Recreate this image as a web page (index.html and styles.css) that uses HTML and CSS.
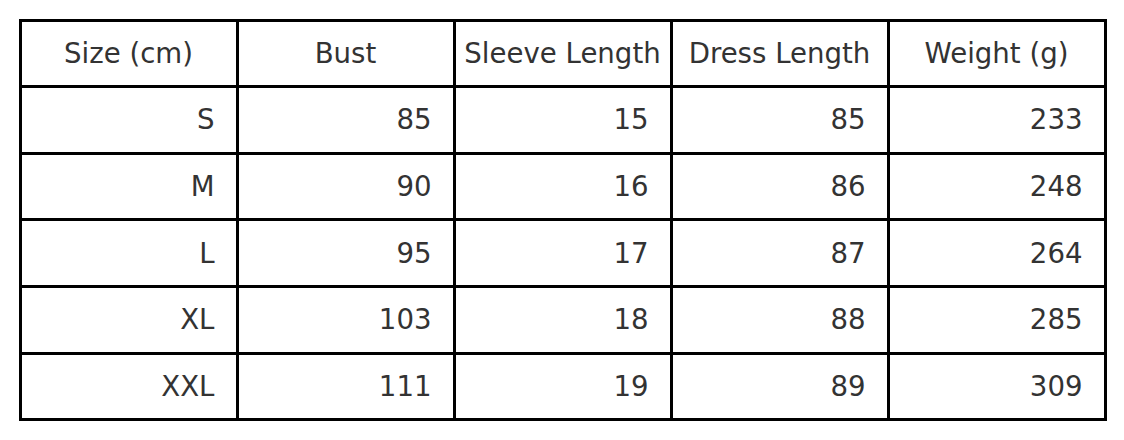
FILE: index.html
```html
<!DOCTYPE html>
<html>
<head>
<meta charset="utf-8">
<link rel="stylesheet" href="styles.css">
</head>
<body>
<table class="size-table">
  <thead>
    <tr><th>Size (cm)</th><th>Bust</th><th>Sleeve Length</th><th>Dress Length</th><th>Weight (g)</th></tr>
  </thead>
  <tbody>
    <tr><td>S</td><td>85</td><td>15</td><td>85</td><td>233</td></tr>
    <tr><td>M</td><td>90</td><td>16</td><td>86</td><td>248</td></tr>
    <tr><td>L</td><td>95</td><td>17</td><td>87</td><td>264</td></tr>
    <tr><td>XL</td><td>103</td><td>18</td><td>88</td><td>285</td></tr>
    <tr><td>XXL</td><td>111</td><td>19</td><td>89</td><td>309</td></tr>
  </tbody>
</table>
</body>
</html>
```
FILE: styles.css
```css
html, body {
  margin: 0;
  padding: 0;
  background: #fff;
}
body {
  padding: 18.5px 18.5px;
  font-family: "DejaVu Sans", sans-serif;
}
.size-table {
  border-collapse: collapse;
  table-layout: fixed;
  width: 1088px;
  color: #333;
  font-size: 27.6px;
}
.size-table tr {
  height: 66.67px;
}
.size-table th,
.size-table td {
  border: 3px solid #000;
  padding: 0 21px 0 0;
}
.size-table th {
  font-weight: normal;
  text-align: center;
  padding: 0;
}
.size-table td {
  text-align: right;
}
```
